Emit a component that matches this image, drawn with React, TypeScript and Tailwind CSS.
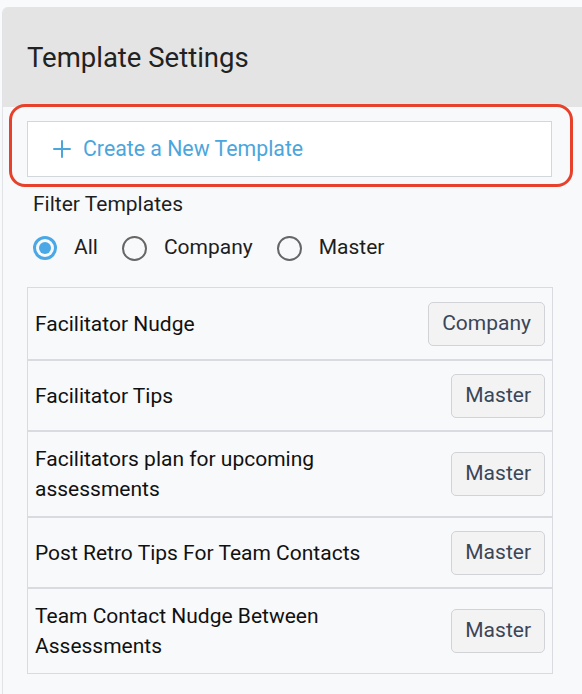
import React, { useState } from "react";

type Template = { name: string; kind: "Company" | "Master" };

const templates: Template[] = [
  { name: "Facilitator Nudge", kind: "Company" },
  { name: "Facilitator Tips", kind: "Master" },
  { name: "Facilitators plan for upcoming assessments", kind: "Master" },
  { name: "Post Retro Tips For Team Contacts", kind: "Master" },
  { name: "Team Contact Nudge Between Assessments", kind: "Master" },
];

function Radio({
  label,
  checked,
  onSelect,
}: {
  label: string;
  checked: boolean;
  onSelect: () => void;
}) {
  return (
    <label
      onClick={onSelect}
      className="flex items-center gap-[17px] cursor-pointer"
    >
      <span
        className={
          checked
            ? "w-6 h-6 rounded-full border-[3px] border-[#4aa8e6] flex items-center justify-center"
            : "w-[25px] h-[25px] rounded-full border-[2.5px] border-[#666666]"
        }
      >
        {checked && <span className="w-3 h-3 rounded-full bg-[#4aa8e6]" />}
      </span>
      <span className="text-[21px] text-[#1e1e1e]">{label}</span>
    </label>
  );
}

export default function App() {
  const [filter, setFilter] = useState("All");

  return (
    <div
      className="relative w-[582px] h-[694px] overflow-hidden bg-[#f9fafb] pt-[7px] pl-[2px]"
      style={{ fontFamily: "Roboto, 'Liberation Sans', sans-serif" }}
    >
      <div className="w-[620px] h-[720px] bg-[#f8f9fb] border-l border-[#e2e3e6] rounded-tl-[6px] overflow-hidden">
        <div className="h-[100px] bg-[#e4e4e4] flex items-center pl-[24px] pt-[2px]">
          <h2 className="text-[27.5px] text-[#222222]">Template Settings</h2>
        </div>

        <div className="pl-[24px] w-[550px]">
          <button className="mt-[14px] w-[525px] h-[56px] bg-white border border-[#d3d6db] flex items-center pl-[24px] gap-[11px] text-[#4aa6dd] text-[21.3px]">
            <svg width="20" height="20" viewBox="0 0 20 20">
              <path
                d="M10 2v16M2 10h16"
                stroke="#4aa6dd"
                strokeWidth="2"
                strokeLinecap="round"
              />
            </svg>
            Create a New Template
          </button>

          <p className="mt-[13px] pl-[6px] text-[21px] leading-[28px] text-[#1e1e1e]">
            Filter Templates
          </p>

          <div className="mt-[17px] pl-[6px] flex items-center gap-[24px] h-[26px]">
            {["All", "Company", "Master"].map((f) => (
              <Radio
                key={f}
                label={f}
                checked={filter === f}
                onSelect={() => setFilter(f)}
              />
            ))}
          </div>

          <div className="mt-[26px] w-[526px] border border-[#d9dbe0]">
            {templates.map((t, i) => (
              <div
                key={t.name}
                className={
                  (i > 0 ? "border-t-2 border-[#d9dbe0] " : "") +
                  "min-h-[71px] flex items-center justify-between px-[7px] py-[12px]"
                }
              >
                <span className="text-[21px] leading-[30px] text-[#111111] w-[330px]">
                  {t.name}
                </span>
                <span className="h-[44px] px-[13px] flex items-center bg-[#f3f3f4] border border-[#d2d3d6] rounded-[5px] text-[21px] text-[#3a4658]">
                  {t.kind}
                </span>
              </div>
            ))}
          </div>
        </div>
      </div>

      {/* highlight ring around the create action */}
      <div className="absolute left-[9px] top-[104px] w-[564px] h-[83px] border-[3px] border-[#e8412b] rounded-[16px] pointer-events-none" />
    </div>
  );
}
